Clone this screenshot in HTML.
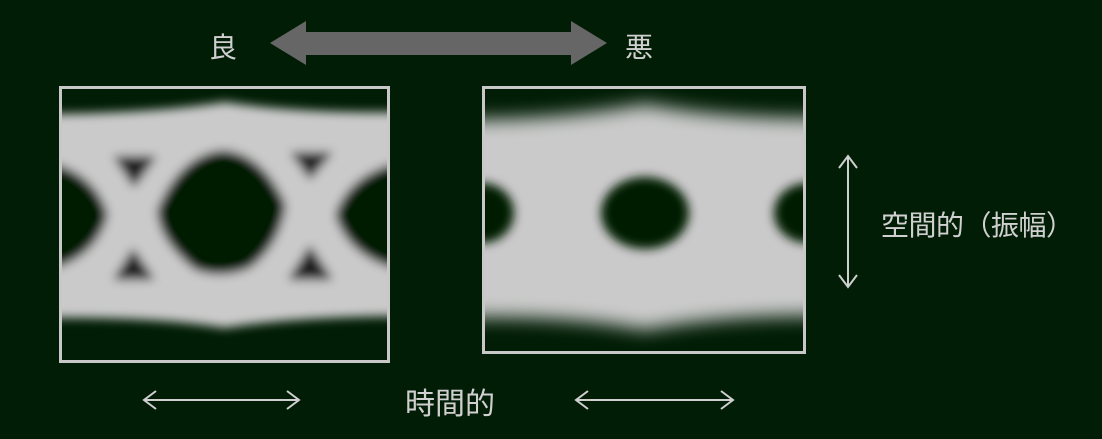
<!DOCTYPE html>
<html><head><meta charset="utf-8"><style>
html,body{margin:0;padding:0;background:#011d05;width:1102px;height:439px;overflow:hidden}
svg{display:block}
text{font-family:"Noto Sans CJK JP","WenQuanYi Zen Hei",sans-serif;fill:#d0d0d0;font-size:28px}
</style></head><body>
<svg width="1102" height="439" viewBox="0 0 1102 439">
<defs>
<filter id="b1" x="-30%" y="-30%" width="160%" height="160%"><feGaussianBlur stdDeviation="5"/></filter>
<filter id="b2" x="-30%" y="-30%" width="160%" height="160%"><feGaussianBlur stdDeviation="9"/></filter>
<clipPath id="c1"><rect x="62" y="89" width="325" height="271"/></clipPath>
<clipPath id="c2"><rect x="485" y="89" width="318" height="262"/></clipPath>
</defs>
<rect width="1102" height="439" fill="#011d05"/>
<polygon points="270,43 306,21 306,32 571,32 571,21 607,43 571,65 571,55 306,55 306,65" fill="#666"/>
<text x="209" y="57">良</text>
<text x="625" y="57">悪</text>
<g clip-path="url(#c1)">
<rect x="62" y="89" width="325" height="271" fill="#011d05"/>
<g filter="url(#b1)">
<path d="M30,114 Q150,114 225,102 Q300,114 420,112 L420,316 Q300,316 225,328 Q150,316 30,318 Z" fill="#cacaca"/>
<path d="M222,150 Q262,152 286,205 Q280,245 250,268 Q222,280 195,270 Q158,240 157,210 Q180,155 222,150 Z" fill="#011d05"/>
<path d="M40,160 Q95,170 108,215 Q95,262 40,272 Z" fill="#011d05"/>
<path d="M410,160 Q350,170 335,215 Q350,262 410,272 Z" fill="#011d05"/>
<polygon points="113,156 157,156 134,188" fill="#1a1a1a"/>
<polygon points="113,280 155,280 133,248" fill="#1a1a1a"/>
<polygon points="290,152 333,152 310,180" fill="#1a1a1a"/>
<polygon points="288,280 333,280 310,245" fill="#1a1a1a"/>
</g>
</g>
<rect x="60.5" y="87.5" width="328" height="274" fill="none" stroke="#c8c8c8" stroke-width="3"/>
<g clip-path="url(#c2)">
<rect x="485" y="89" width="318" height="262" fill="#011d05"/>
<g filter="url(#b2)">
<path d="M450,120 Q560,120 645,104 Q730,120 840,118 L840,316 Q730,314 645,330 Q560,314 450,318 Z" fill="#cacaca"/>
</g>
<g filter="url(#b1)">
<ellipse cx="645" cy="213" rx="44" ry="36" fill="#011d05"/>
<ellipse cx="482" cy="213" rx="32" ry="30" fill="#011d05"/>
<ellipse cx="808" cy="213" rx="34" ry="30" fill="#011d05"/>
</g>
</g>
<rect x="483.5" y="87.5" width="321" height="265" fill="none" stroke="#c8c8c8" stroke-width="3"/>
<g stroke="#cfcfcf" stroke-width="2" fill="none">
<path d="M144,400 H299 M156,391 L144,400 L156,409 M287,391 L299,400 L287,409"/>
<path d="M576,400 H733 M588,391 L576,400 L588,409 M721,391 L733,400 L721,409"/>
<path d="M848,156 V287 M839,168 L848,156 L857,168 M839,275 L848,287 L857,275"/>
</g>
<text x="405" y="414" style="font-size:30px">時間的</text>
<text x="881" y="235" style="font-size:28px;letter-spacing:-0.5px">空間的（振幅）</text>
</svg>
</body></html>
